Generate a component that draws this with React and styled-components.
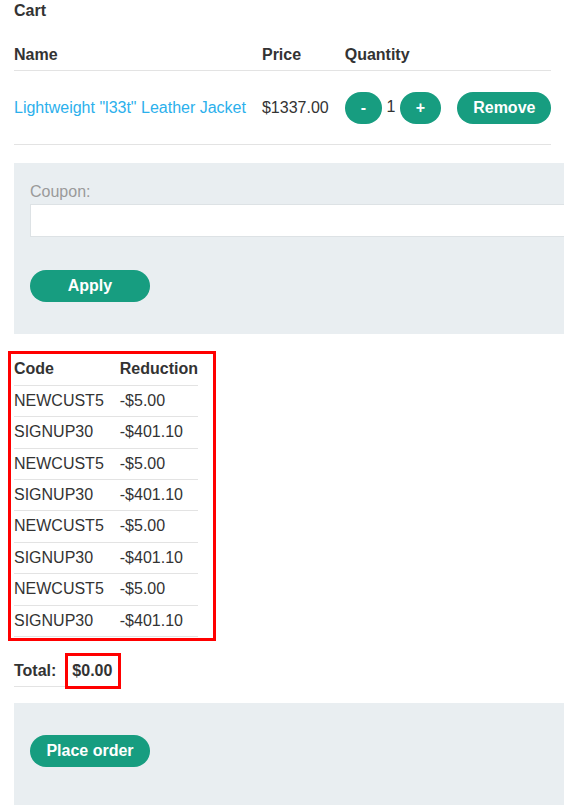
import styled, { createGlobalStyle } from "styled-components"

const GlobalStyle = createGlobalStyle`
  html, body {
    margin: 0;
    padding: 0;
    overflow: hidden;
    background: #fff;
  }
  body {
    font-family: "Liberation Sans", Arial, sans-serif;
    font-size: 16px;
    color: #333;
  }
`

const cartItems = [
    { name: 'Lightweight "l33t" Leather Jacket', price: "$1337.00", quantity: 1 },
]

const discounts = [
    { code: "NEWCUST5", reduction: "-$5.00" },
    { code: "SIGNUP30", reduction: "-$401.10" },
    { code: "NEWCUST5", reduction: "-$5.00" },
    { code: "SIGNUP30", reduction: "-$401.10" },
    { code: "NEWCUST5", reduction: "-$5.00" },
    { code: "SIGNUP30", reduction: "-$401.10" },
    { code: "NEWCUST5", reduction: "-$5.00" },
    { code: "SIGNUP30", reduction: "-$401.10" },
]

export default function App() {
    return (
        <>
            <GlobalStyle />
            <Page>
                <Heading>Cart</Heading>

                <Table>
                    <thead>
                        <tr>
                            <Th>Name</Th>
                            <Th>Price</Th>
                            <Th>Quantity</Th>
                            <Th></Th>
                        </tr>
                    </thead>
                    <tbody>
                        {cartItems.map((item, i) => (
                            <tr key={i}>
                                <ItemCell><ProductLink href="#">{item.name}</ProductLink></ItemCell>
                                <ItemCell>{item.price}</ItemCell>
                                <ItemCell>
                                    <Button>-</Button> {item.quantity} <Button>+</Button>
                                </ItemCell>
                                <ItemCell><Button>Remove</Button></ItemCell>
                            </tr>
                        ))}
                    </tbody>
                </Table>

                <Panel>
                    <Label htmlFor="coupon">Coupon:</Label>
                    <CouponInput id="coupon" type="text" />
                    <Button wide>Apply</Button>
                </Panel>

                <Highlight>
                    <Table>
                        <thead>
                            <tr>
                                <Th>Code</Th>
                                <Th>Reduction</Th>
                            </tr>
                        </thead>
                        <tbody>
                            {discounts.map((d, i) => (
                                <tr key={i}>
                                    <Td>{d.code}</Td>
                                    <Td>{d.reduction}</Td>
                                </tr>
                            ))}
                        </tbody>
                    </Table>
                </Highlight>

                <TotalTable>
                    <tbody>
                        <tr>
                            <Th>Total:</Th>
                            <TotalCell><TotalMark />$0.00</TotalCell>
                        </tr>
                    </tbody>
                </TotalTable>

                <Panel tall>
                    <Button wide>Place order</Button>
                </Panel>
            </Page>
        </>
    )
}

const Page = styled.div`
    width: 620px;
    padding: 2px 0 0 14px;
`

const Heading = styled.h2`
    font-size: 16px;
    font-weight: bold;
    margin: 0 0 20px;
`

const Table = styled.table`
    border-collapse: collapse;
    margin-bottom: 18px;
    line-height: 1.15;
`

const TotalTable = styled(Table)`
    margin-top: 19px;
    margin-bottom: 16px;
`

const Th = styled.th`
    text-align: left;
    font-weight: bold;
    padding: 6px 16px 6px 0;
    border-bottom: 1px solid #e3e3e3;
    &:last-child { padding-right: 0; }
`

const Td = styled.td`
    padding: 6px 16px 6px 0;
    border-bottom: 1px solid #e3e3e3;
    &:last-child { padding-right: 0; }
`

const ItemCell = styled(Td)`
    padding-top: 21px;
    padding-bottom: 20px;
    vertical-align: middle;
    white-space: nowrap;
`

const ProductLink = styled.a`
    color: #2bb0ec;
    text-decoration: none;
`

const Button = styled.button`
    display: inline-block;
    vertical-align: middle;
    height: 32px;
    min-width: ${p => (p.wide ? "120px" : "0")};
    padding: 0 16px;
    border: none;
    border-radius: 16px;
    background: #179d80;
    color: #fff;
    font-family: "Liberation Sans", Arial, sans-serif;
    font-size: 16px;
    font-weight: bold;
    cursor: pointer;
`

const Panel = styled.div`
    background: #e9eef1;
    padding: 16px 16px ${p => (p.tall ? "40px" : "16px")};
    margin-bottom: 18px;

    ${Button} {
        margin: 16px 0;
    }
`

const Label = styled.label`
    display: block;
    color: #9a9a9a;
    margin-top: 4px;
    margin-bottom: 3px;
`

const CouponInput = styled.input`
    display: block;
    box-sizing: border-box;
    width: 100%;
    height: 33px;
    margin-bottom: 17px;
    border: 1px solid #dde2e5;
    background: #fff;
    font-size: 16px;
    padding: 0 8px;
`

const Highlight = styled.div`
    position: relative;
    display: inline-block;
    margin-top: 2px;
    vertical-align: top;

    ${Table} {
        margin-bottom: 0;
    }

    &::after {
        content: "";
        position: absolute;
        top: -3px;
        left: -6px;
        right: -18px;
        bottom: -4px;
        border: 3px solid #f00;
        pointer-events: none;
    }
`

const TotalCell = styled(Td)`
    position: relative;
    font-weight: bold;
`

const TotalMark = styled.span`
    position: absolute;
    top: -3px;
    left: -7px;
    right: -9px;
    bottom: -3px;
    border: 3px solid #f00;
    pointer-events: none;
`
